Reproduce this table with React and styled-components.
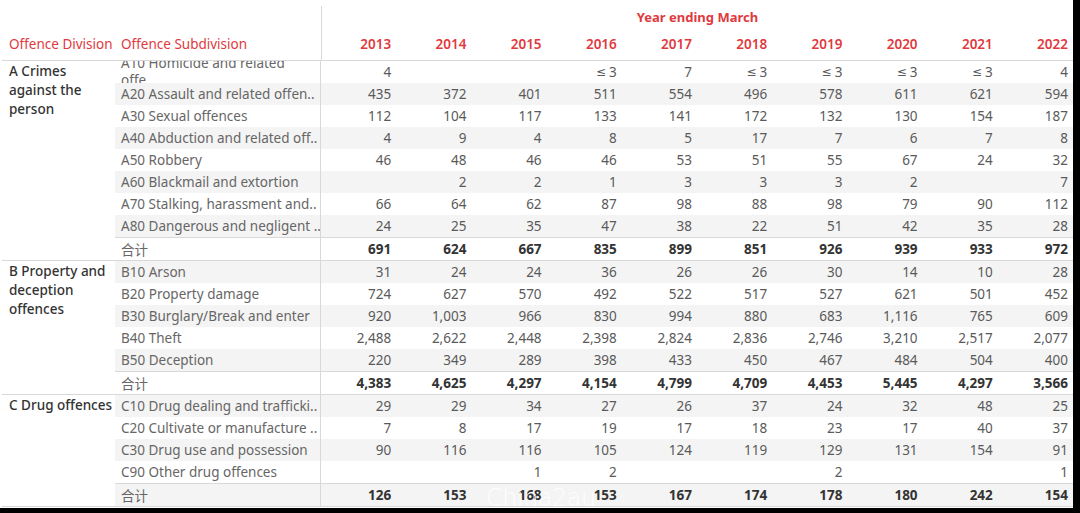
import React from "react";
import styled, { createGlobalStyle } from "styled-components";

const GlobalStyle = createGlobalStyle`
  html, body {
    margin: 0;
    padding: 0;
    background: #000;
  }
  body {
    font-family: "Noto Sans", "Noto Sans CJK SC", sans-serif;
  }
`;

const YEARS = ["2013", "2014", "2015", "2016", "2017", "2018", "2019", "2020", "2021", "2022"];

const LE3 = "≤ 3";

const GROUPS = [
  {
    name: "A Crimes against the person",
    rows: [
      ["A10 Homicide and related offe", ["4", "", "", LE3, "7", LE3, LE3, LE3, LE3, "4"]],
      ["A20 Assault and related offen..", ["435", "372", "401", "511", "554", "496", "578", "611", "621", "594"]],
      ["A30 Sexual offences", ["112", "104", "117", "133", "141", "172", "132", "130", "154", "187"]],
      ["A40 Abduction and related off..", ["4", "9", "4", "8", "5", "17", "7", "6", "7", "8"]],
      ["A50 Robbery", ["46", "48", "46", "46", "53", "51", "55", "67", "24", "32"]],
      ["A60 Blackmail and extortion", ["", "2", "2", "1", "3", "3", "3", "2", "", "7"]],
      ["A70 Stalking, harassment and..", ["66", "64", "62", "87", "98", "88", "98", "79", "90", "112"]],
      ["A80 Dangerous and negligent ..", ["24", "25", "35", "47", "38", "22", "51", "42", "35", "28"]],
    ],
    total: ["691", "624", "667", "835", "899", "851", "926", "939", "933", "972"],
  },
  {
    name: "B Property and deception offences",
    rows: [
      ["B10 Arson", ["31", "24", "24", "36", "26", "26", "30", "14", "10", "28"]],
      ["B20 Property damage", ["724", "627", "570", "492", "522", "517", "527", "621", "501", "452"]],
      ["B30 Burglary/Break and enter", ["920", "1,003", "966", "830", "994", "880", "683", "1,116", "765", "609"]],
      ["B40 Theft", ["2,488", "2,622", "2,448", "2,398", "2,824", "2,836", "2,746", "3,210", "2,517", "2,077"]],
      ["B50 Deception", ["220", "349", "289", "398", "433", "450", "467", "484", "504", "400"]],
    ],
    total: ["4,383", "4,625", "4,297", "4,154", "4,799", "4,709", "4,453", "5,445", "4,297", "3,566"],
  },
  {
    name: "C Drug offences",
    rows: [
      ["C10 Drug dealing and trafficki..", ["29", "29", "34", "27", "26", "37", "24", "32", "48", "25"]],
      ["C20 Cultivate or manufacture ..", ["7", "8", "17", "19", "17", "18", "23", "17", "40", "37"]],
      ["C30 Drug use and possession", ["90", "116", "116", "105", "124", "119", "129", "131", "154", "91"]],
      ["C90 Other drug offences", ["", "", "1", "2", "", "", "2", "", "", "1"]],
    ],
    total: ["126", "153", "168", "153", "167", "174", "178", "180", "242", "154"],
  },
];

const RED = "#e0393e";
const LINE = "#d8d8d8";
const STRIPE = "#f4f4f4";

// Outer white sheet sitting on the black backdrop
const Sheet = styled.div`
  position: relative;
  width: 1071px;
  height: 508px;
  padding: 0 0 0 2px;
  background: #fff;
  overflow: hidden;
  font-size: 13.5px;
`;

const HeaderGrid = styled.div`
  display: grid;
  grid-template-columns: 113px 206px repeat(10, 1fr);
  grid-template-rows: 22px 32px;
  margin-top: 6px;
  border-bottom: 1px solid ${LINE};
`;

const TitleCell = styled.div`
  grid-column: 3 / span 10;
  grid-row: 1;
  display: flex;
  align-items: center;
  justify-content: center;
  border-left: 1px solid ${LINE};
  color: ${RED};
  font-weight: 700;
  font-size: 13px;
`;

const HeadLabel = styled.div`
  grid-row: 2;
  display: flex;
  align-items: center;
  padding-left: ${(p) => p.$pad || 6}px;
  color: ${RED};
  font-size: 13.5px;
  white-space: nowrap;
`;

const YearCell = styled.div`
  grid-row: 2;
  display: flex;
  align-items: center;
  justify-content: flex-end;
  padding-right: 5px;
  color: ${RED};
  font-weight: 600;
  font-size: 13.5px;
  border-left: ${(p) => (p.$divider ? `1px solid ${LINE}` : "none")};
`;

const Group = styled.div`
  display: flex;
  border-bottom: 1px solid ${LINE};
`;

const Division = styled.div`
  width: 106px;
  flex: none;
  padding: 1px 0 0 7px;
  color: #333;
  font-weight: 500;
  font-size: 13.5px;
  line-height: 19px;
`;

const Rows = styled.div`
  flex: 1;
  display: flex;
  flex-direction: column;
`;

const Row = styled.div`
  display: grid;
  grid-template-columns: 206px repeat(10, 1fr);
  height: 22px;
  background: ${(p) => (p.$striped ? STRIPE : "#fff")};
  border-top: ${(p) => (p.$total ? `1px solid ${LINE}` : "none")};
`;

const SubCell = styled.div`
  display: flex;
  align-items: center;
  padding-left: 6px;
  overflow: hidden;
  color: #666;
  font-size: 13.5px;
  white-space: nowrap;
  border-right: 1px solid ${LINE};
`;

const Clipped = styled.span`
  display: block;
  flex: none;
  width: 170px;
  white-space: normal;
  line-height: 17px;
`;

const NumCell = styled.div`
  display: flex;
  align-items: center;
  justify-content: flex-end;
  padding-right: 5px;
  color: ${(p) => (p.$total ? "#333" : "#5a5a5a")};
  font-weight: ${(p) => (p.$total ? 700 : 400)};
  font-size: 13.5px;
`;

const LessEq = styled.span`
  font-family: "DejaVu Sans", sans-serif;
  font-size: 12px;
  margin-right: 3px;
`;

const Watermark = styled.div`
  position: absolute;
  left: 486px;
  top: 484px;
  color: rgba(255, 255, 255, 0.9);
  font-family: "DejaVu Sans", sans-serif;
  font-weight: 200;
  font-size: 24px;
  letter-spacing: -0.5px;
`;

const renderValue = (v) =>
  v === LE3 ? (
    <>
      <LessEq>≤</LessEq>3
    </>
  ) : (
    v
  );

let stripeIndex = 0;

const App = () => {
  stripeIndex = 0;
  return (
    <>
      <GlobalStyle />
      <Sheet>
        <HeaderGrid>
          <TitleCell>Year ending March</TitleCell>
          <HeadLabel $pad={7}>Offence Division</HeadLabel>
          <HeadLabel>Offence Subdivision</HeadLabel>
          {YEARS.map((y, i) => (
            <YearCell key={y} $divider={i === 0}>
              {y}
            </YearCell>
          ))}
        </HeaderGrid>

        {GROUPS.map((g) => (
          <Group key={g.name}>
            <Division>{g.name}</Division>
            <Rows>
              {g.rows.map(([label, values]) => {
                const striped = stripeIndex++ % 2 === 1;
                return (
                  <Row key={label} $striped={striped}>
                    <SubCell>
                      {label.startsWith("A10") ? <Clipped>{label}</Clipped> : label}
                    </SubCell>
                    {values.map((v, i) => (
                      <NumCell key={i}>{renderValue(v)}</NumCell>
                    ))}
                  </Row>
                );
              })}
              <Row $total $striped={stripeIndex++ % 2 === 1}>
                <SubCell>合计</SubCell>
                {g.total.map((v, i) => (
                  <NumCell key={i} $total>
                    {v}
                  </NumCell>
                ))}
              </Row>
            </Rows>
          </Group>
        ))}
        <Watermark>China2au</Watermark>
      </Sheet>
    </>
  );
};

export default App;
